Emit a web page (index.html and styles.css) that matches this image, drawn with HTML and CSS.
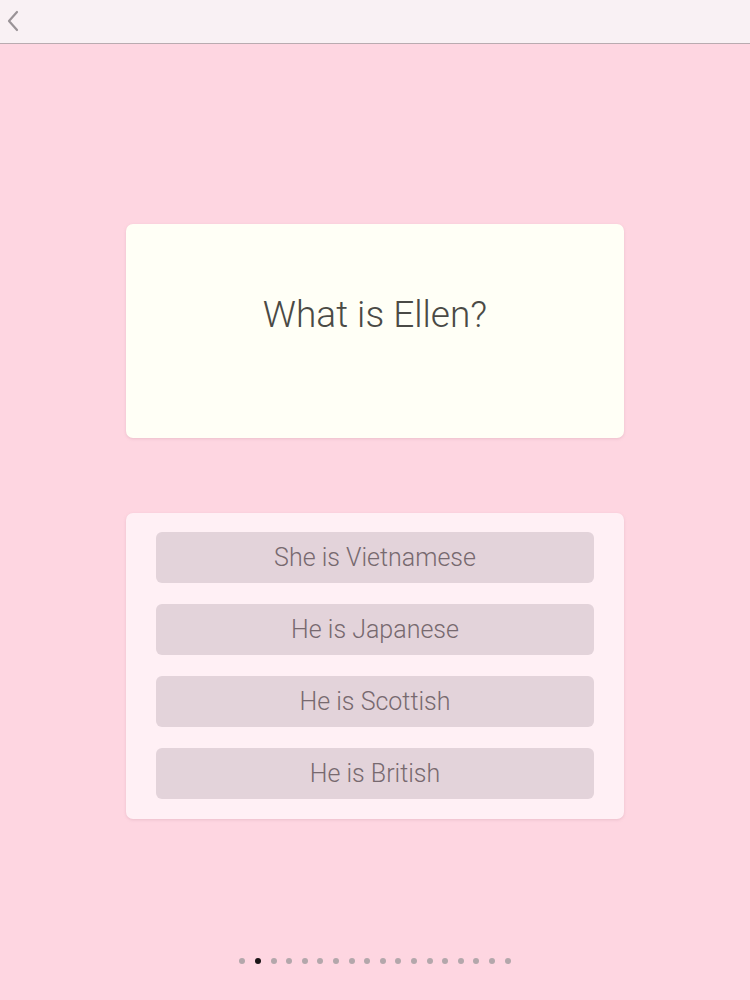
FILE: index.html
```html
<!DOCTYPE html>
<html>
<head>
<meta charset="utf-8">
<link rel="stylesheet" href="styles.css">
</head>
<body>
<div class="topbar">
  <svg class="back" width="14" height="22" viewBox="0 0 14 22"><path d="M11 2 L3 11 L11 20" fill="none" stroke="#9a9397" stroke-width="2.2" stroke-linecap="round" stroke-linejoin="round"/></svg>
</div>
<main class="main">
  <div class="question">What is Ellen?</div>
  <div class="options">
    <div class="opt">She is Vietnamese</div>
    <div class="opt">He is Japanese</div>
    <div class="opt">He is Scottish</div>
    <div class="opt">He is British</div>
  </div>
  <div class="dots">
    <span class="dot"></span><span class="dot active"></span><span class="dot"></span><span class="dot"></span><span class="dot"></span><span class="dot"></span><span class="dot"></span><span class="dot"></span><span class="dot"></span><span class="dot"></span><span class="dot"></span><span class="dot"></span><span class="dot"></span><span class="dot"></span><span class="dot"></span><span class="dot"></span><span class="dot"></span><span class="dot"></span>
  </div>
</main>
</body>
</html>
```
FILE: styles.css
```css
html, body {
  margin: 0;
  padding: 0;
}
body {
  width: 750px;
  height: 1000px;
  background: #fed6e1;
  font-family: Roboto, "Liberation Sans", sans-serif;
  overflow: hidden;
}
.topbar {
  height: 43px;
  background: #f9f1f4;
  border-bottom: 1px solid #b9abb0;
  display: flex;
  align-items: center;
  padding-left: 6px;
  box-sizing: content-box;
}
.back {
  display: block;
  margin-top: -2px;
}
.main {
  display: flex;
  flex-direction: column;
  align-items: center;
}
.question {
  margin-top: 180px;
  width: 498px;
  height: 214px;
  background: #fffff6;
  border-radius: 7px;
  box-shadow: 0 1px 3px rgba(200, 150, 165, 0.35);
  display: flex;
  align-items: center;
  justify-content: center;
  padding-bottom: 34px;
  box-sizing: border-box;
  font-size: 37px;
  font-weight: 300;
  color: #4a4a45;
}
.options {
  margin-top: 75px;
  width: 498px;
  background: #fff0f5;
  border-radius: 7px;
  box-shadow: 0 1px 3px rgba(200, 150, 165, 0.35);
  padding: 19px 30px 20px;
  box-sizing: border-box;
  display: flex;
  flex-direction: column;
  gap: 21px;
}
.opt {
  height: 51px;
  background: #e3d3da;
  border-radius: 6px;
  display: flex;
  align-items: center;
  justify-content: center;
  font-size: 25px;
  font-weight: 300;
  color: #77696f;
}
.dots {
  margin-top: 139px;
  display: flex;
  gap: 9.6px;
}
.dot {
  width: 6px;
  height: 6px;
  border-radius: 50%;
  background: #b3a7ab;
}
.dot.active {
  background: #1a1416;
}
```
